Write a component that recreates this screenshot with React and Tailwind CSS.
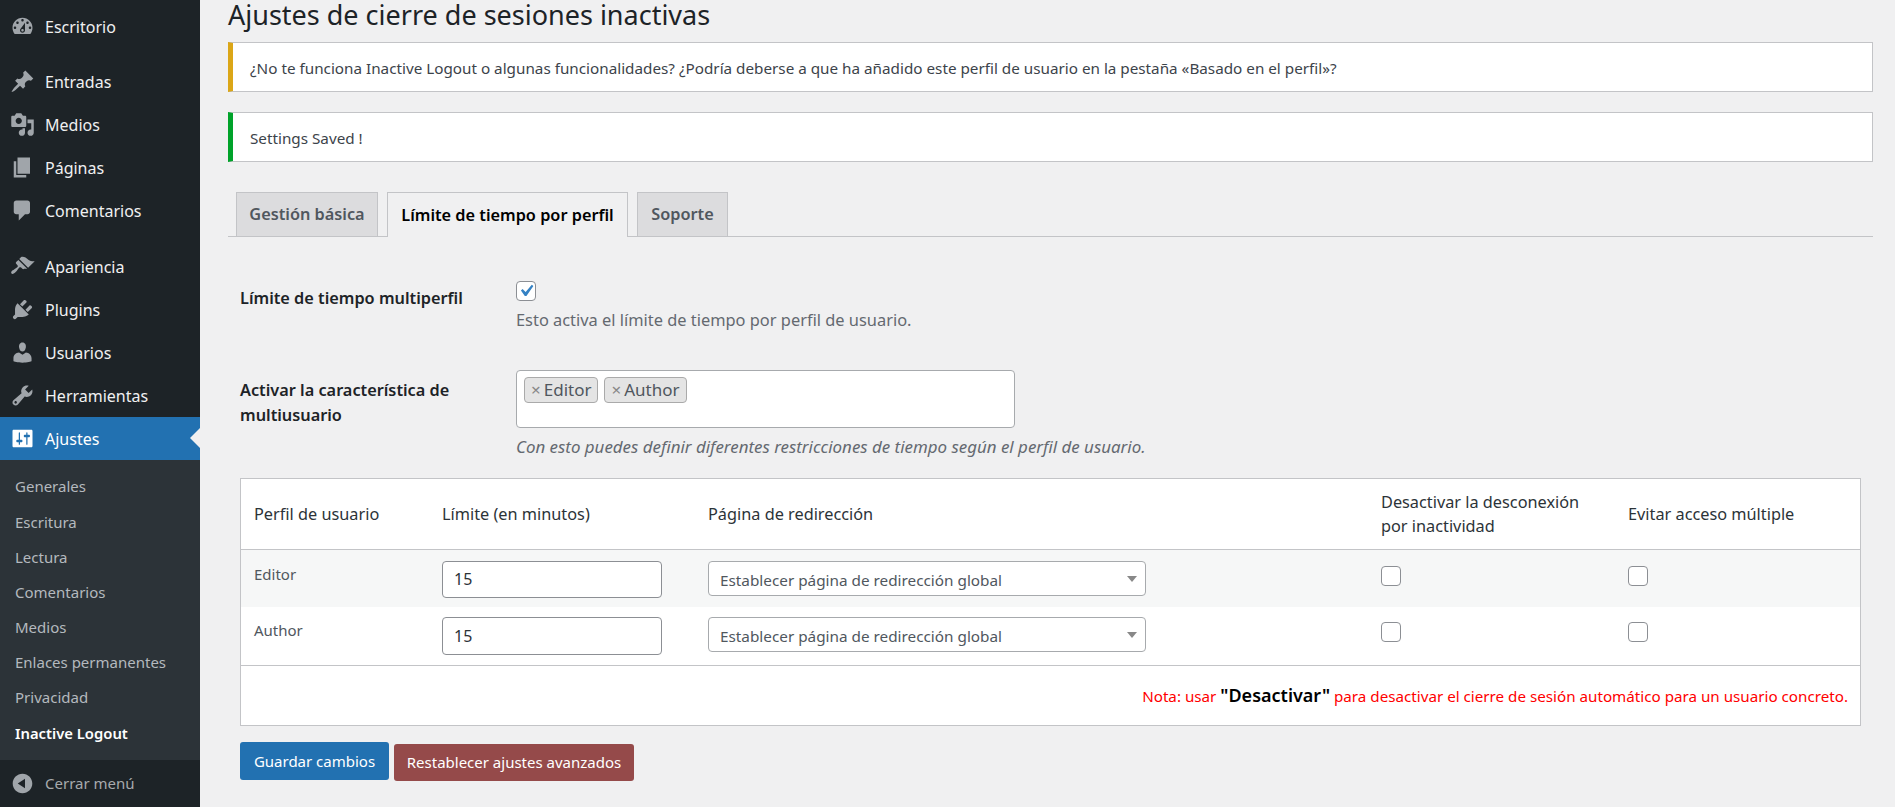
import React from 'react';

const ICONS = {
  dashboard: 'M3.76 16h12.48c1.1-1.37 1.76-3.11 1.76-5 0-4.42-3.58-8-8-8s-8 3.58-8 8c0 1.89.66 3.63 1.76 5zM10 4c.55 0 1 .45 1 1s-.45 1-1 1-1-.45-1-1 .45-1 1-1zM6 6c.55 0 1 .45 1 1s-.45 1-1 1-1-.45-1-1 .45-1 1-1zm8 0c.55 0 1 .45 1 1s-.45 1-1 1-1-.45-1-1 .45-1 1-1zm-5.37 5.55L12 7v6c0 1.1-.9 2-2 2s-2-.9-2-2c0-.57.24-1.08.63-1.45zM4 10c.55 0 1 .45 1 1s-.45 1-1 1-1-.45-1-1 .45-1 1-1zm12 0c.55 0 1 .45 1 1s-.45 1-1 1-1-.45-1-1 .45-1 1-1zm-5 3c0-.55-.45-1-1-1s-1 .45-1 1 .45 1 1 1 1-.45 1-1z',
  post: 'M10.44 3.02l1.82-1.82 6.36 6.35-1.83 1.82c-1.05-.68-2.48-.57-3.41.36l-.75.75c-.92.93-1.04 2.35-.35 3.41l-1.83 1.82-2.41-2.41-2.8 2.79c-.42.42-3.38 2.71-3.8 2.29s1.86-3.39 2.28-3.81l2.79-2.79L4.1 9.36l1.83-1.82c1.05.69 2.48.57 3.4-.36l.75-.75c.93-.92 1.05-2.35.36-3.41z',
  media: 'M13 11V4c0-.55-.45-1-1-1h-1.67L9 1H5L3.67 3H2c-.55 0-1 .45-1 1v7c0 .55.45 1 1 1h10c.55 0 1-.45 1-1zM7 4.5c1.38 0 2.5 1.12 2.5 2.5S8.38 9.5 7 9.5 4.5 8.38 4.5 7 5.62 4.5 7 4.5zM14 6h5v10.5c0 1.38-1.12 2.5-2.5 2.5S14 17.88 14 16.5s1.12-2.5 2.5-2.5c.17 0 .34.02.5.05V9h-3V6zm-4 8.05V13h2v3.5c0 1.38-1.12 2.5-2.5 2.5S7 17.88 7 16.5 8.12 14 9.5 14c.17 0 .34.02.5.05z',
  page: 'M6 15V2h10v13H6zm-1 1h8v2H3V5h2v11z',
  comments: 'M5 2h9c1.1 0 2 .9 2 2v7c0 1.1-.9 2-2 2h-2l-5 5v-5H5c-1.1 0-2-.9-2-2V4c0-1.1.9-2 2-2z',
  appearance: 'M14.48 11.06L7.41 3.99l1.5-1.5c.5-.56 2.3-.47 3.51.32 1.21.8 1.43 1.28 2.91 2.1 1.18.64 2.45 1.26 4.45.85zm-.71.71L6.7 4.7 4.93 6.47c-.39.39-.39 1.02 0 1.41l1.06 1.06c.39.39.39 1.03 0 1.42-.6.6-1.43 1.11-2.21 1.69-.35.26-.7.53-1.01.84C1.43 13.23.4 14.84 1.19 15.63c.79.79 2.4-.24 3.74-1.58.31-.31.58-.66.84-1.01.58-.78 1.09-1.61 1.69-2.21.39-.39 1.02-.39 1.41 0l1.06 1.06c.39.39 1.02.39 1.41 0z',
  plugins: 'M13.11 4.36L9.87 7.6 8 5.73l3.24-3.24c.35-.34 1.05-.2 1.56.32.52.51.66 1.21.31 1.55zm-8 1.77l.91-1.12 9.01 9.01-1.19.84c-.71.71-2.63 1.16-3.82 1.16H6.14L4.9 17.26c-.59.59-1.54.59-2.12 0-.59-.58-.59-1.53 0-2.12l1.24-1.24v-3.88c0-1.13.4-3.19 1.09-3.89zm7.26 3.97l3.24-3.24c.34-.35 1.04-.21 1.55.31.52.51.66 1.21.31 1.55l-3.24 3.25z',
  users: 'M10 9.25c-2.27 0-2.73-3.44-2.73-3.44C7 4.02 7.82 2 9.97 2c2.16 0 2.98 2.02 2.71 3.81 0 0-.41 3.44-2.68 3.44zm0 2.57L12.72 10c2.39 0 4.52 2.33 4.52 4.53v2.49s-3.65 1.13-7.24 1.13c-3.65 0-7.24-1.13-7.24-1.13v-2.49c0-2.25 1.94-4.48 4.47-4.48z',
  tools: 'M16.68 9.77c-1.34 1.34-3.3 1.67-4.95.99l-5.41 6.52c-.99.99-2.59.99-3.58 0s-.99-2.59 0-3.57l6.52-5.42c-.68-1.65-.35-3.61.99-4.95 1.28-1.28 3.12-1.62 4.72-1.06l-2.89 2.89 2.82 2.82 2.86-2.87c.53 1.58.18 3.39-1.08 4.65zM3.81 16.21c.4.39 1.04.39 1.43 0 .4-.4.4-1.04 0-1.43-.39-.4-1.03-.4-1.43 0-.39.39-.39 1.03 0 1.43z',
  settings: 'M18 16V4c0-.55-.45-1-1-1H3c-.55 0-1 .45-1 1v12c0 .55.45 1 1 1h14c.55 0 1-.45 1-1zM8 11h1c.55 0 1 .45 1 1s-.45 1-1 1H8v1.5c0 .28-.22.5-.5.5s-.5-.22-.5-.5V13H6c-.55 0-1-.45-1-1s.45-1 1-1h1V5.5c0-.28.22-.5.5-.5s.5.22.5.5V11zm5-2h-1c-.55 0-1-.45-1-1s.45-1 1-1h1V5.5c0-.28.22-.5.5-.5s.5.22.5.5V7h1c.55 0 1 .45 1 1s-.45 1-1 1h-1v5.5c0 .28-.22.5-.5.5s-.5-.22-.5-.5V9z',
  collapse: 'M10 2.16c4.33 0 7.84 3.51 7.84 7.84s-3.51 7.84-7.84 7.84S2.16 14.33 2.16 10 5.71 2.16 10 2.16zm2 11.72V6.12L6.18 9.97z',
};

const GROUPS = [
  [['dashboard', 'Escritorio']],
  [['post', 'Entradas'], ['media', 'Medios'], ['page', 'Páginas'], ['comments', 'Comentarios']],
  [['appearance', 'Apariencia'], ['plugins', 'Plugins'], ['users', 'Usuarios'], ['tools', 'Herramientas']],
];

const SUBMENU = ['Generales', 'Escritura', 'Lectura', 'Comentarios', 'Medios', 'Enlaces permanentes', 'Privacidad'];
const ROLES = ['Editor', 'Author'];

function Dashicon({ name, className }) {
  return (
    <svg viewBox="0 0 20 20" fill="currentColor" className={className}>
      <path d={ICONS[name]} />
    </svg>
  );
}

function MenuItem({ icon, label }) {
  return (
    <div className="flex h-[43px] items-center pl-[10px] text-[16px] text-[#f0f0f1]">
      <Dashicon name={icon} className="w-[25px] h-[25px] text-[#a0a5aa] shrink-0" />
      <span className="ml-[10px]">{label}</span>
    </div>
  );
}

function Sidebar() {
  return (
    <aside className="w-[200px] shrink-0 h-[807px] flex flex-col bg-[#1d2327]">
      <div className="pt-[5px]">
        <MenuItem icon={GROUPS[0][0][0]} label={GROUPS[0][0][1]} />
      </div>
      <div className="pt-[12px]">
        {GROUPS[1].map(([icon, label]) => <MenuItem key={label} icon={icon} label={label} />)}
      </div>
      <div className="pt-[13px]">
        {GROUPS[2].map(([icon, label]) => <MenuItem key={label} icon={icon} label={label} />)}
      </div>
      <div className="relative flex h-[43px] items-center pl-[10px] text-[16px] text-white bg-[#2271b1]">
        <Dashicon name="settings" className="w-[25px] h-[25px] text-white shrink-0" />
        <span className="ml-[10px]">Ajustes</span>
        <span className="absolute right-0 top-[11px] border-y-[10px] border-r-[10px] border-y-transparent border-r-[#f0f0f1]" />
      </div>
      <div className="flex-1 bg-[#2c3338] pt-[9px]">
        {SUBMENU.map((label) => (
          <div key={label} className="flex h-[35.2px] items-center pl-[15px] text-[15px] text-[#b4b9be]">{label}</div>
        ))}
        <div className="flex h-[35.2px] items-center pl-[15px] text-[14.8px] font-semibold text-white">Inactive Logout</div>
      </div>
      <div className="flex h-[47px] items-center pl-[10px] text-[15px] text-[#a7aaad]">
        <Dashicon name="collapse" className="w-[25px] h-[25px] text-[#a0a5aa] shrink-0" />
        <span className="ml-[10px]">Cerrar menú</span>
      </div>
    </aside>
  );
}

function Notice({ color, children }) {
  return (
    <div className={`flex h-[50px] items-center bg-white border border-[#c3c4c7] border-l-[5px] ${color} pl-[17px] pt-[2px] text-[15.25px] text-[#3c434a]`}>
      {children}
    </div>
  );
}

function Checkbox() {
  return <span className="block w-[20px] h-[20px] rounded-[4px] border border-[#8c8f94] bg-white" />;
}

function RoleRow({ role, striped }) {
  return (
    <tr className={`h-[58px] align-top ${striped ? 'bg-[#f6f7f7]' : 'bg-white'}`}>
      <td className={`pl-[13px] text-[15px] leading-[22px] text-[#50575e] ${striped ? 'pt-[13px]' : 'pt-[12px]'}`}>{role}</td>
      <td className={`pl-[14px] ${striped ? 'pt-[11px]' : 'pt-[10px]'}`}>
        <input
          type="text"
          defaultValue="15"
          className={`block w-[220px] rounded-[4px] border border-[#8c8f94] bg-white px-[11px] text-[16px] text-[#2c3338] ${striped ? 'h-[37px]' : 'h-[38px]'}`}
        />
      </td>
      <td className={`pl-[14px] ${striped ? 'pt-[11px]' : 'pt-[10px]'}`}>
        <div className="relative w-[438px]">
          <select className="block w-full h-[35px] appearance-none rounded-[4px] border border-[#a7aaad] bg-white pl-[11px] pt-[4px] text-[15.3px] text-[#50575e]">
            <option>Establecer página de redirección global</option>
          </select>
          <span className="absolute right-[9px] top-[15px] border-x-[5px] border-t-[6px] border-x-transparent border-t-[#888888]" />
        </div>
      </td>
      <td className={`pl-[14px] ${striped ? 'pt-[16px]' : 'pt-[15px]'}`}><Checkbox /></td>
      <td className={`pl-[14px] ${striped ? 'pt-[16px]' : 'pt-[15px]'}`}><Checkbox /></td>
    </tr>
  );
}

function Tag({ label }) {
  return (
    <span className="flex h-[26px] items-center rounded-[4px] border border-[#aaaaaa] bg-[#e4e4e4] px-[6px] text-[17px] text-[#50575e]">
      <span className="mr-[3px] text-[#888888]">×</span>{label}
    </span>
  );
}

export default function App() {
  return (
    <div className="flex h-[807px] overflow-hidden bg-[#f0f0f1] font-['Noto_Sans',sans-serif]">
      <Sidebar />
      <main className="flex-1 pl-[28px] pr-[22px]">
        <h1 className="text-[27px] leading-[30px] text-[#1d2327]">Ajustes de cierre de sesiones inactivas</h1>

        <div className="mt-[12px]">
          <Notice color="border-l-[#dba617]">¿No te funciona Inactive Logout o algunas funcionalidades? ¿Podría deberse a que ha añadido este perfil de usuario en la pestaña «Basado en el perfil»?</Notice>
        </div>
        <div className="mt-[20px]">
          <Notice color="border-l-[#00a32a]">Settings Saved !</Notice>
        </div>

        <div className="mt-[30px] flex gap-[9px] border-b border-[#c3c4c7] pl-[8px] text-[16.3px] font-semibold">
          <div className="flex h-[44px] w-[142px] items-center justify-center border border-b-0 border-[#c3c4c7] bg-[#dcdcde] text-[#50575e]">Gestión básica</div>
          <div className="-mb-px flex h-[45px] w-[241px] items-center justify-center border border-b-0 border-[#c3c4c7] bg-[#f0f0f1] text-black">Límite de tiempo por perfil</div>
          <div className="flex h-[44px] w-[91px] items-center justify-center border border-b-0 border-[#c3c4c7] bg-[#dcdcde] text-[#50575e]">Soporte</div>
        </div>

        <div className="px-[12px]">
          <div className="mt-[44px] flex">
            <div className="w-[276px] pt-[5px] text-[16.3px] font-semibold leading-[24px] text-[#1d2327]">Límite de tiempo multiperfil</div>
            <div>
              <span className="flex w-[20px] h-[20px] items-center justify-center rounded-[4px] border border-[#8c8f94] bg-white">
                <svg viewBox="0 0 20 20" className="w-[24px] h-[24px] shrink-0" fill="#3582c4"><path d="M14.83 4.89l1.34.94-5.81 8.38H9.02L5.78 9.67l1.34-1.25 2.57 2.4z" /></svg>
              </span>
              <p className="mt-[7px] text-[16.4px] leading-[24px] text-[#646970]">Esto activa el límite de tiempo por perfil de usuario.</p>
            </div>
          </div>

          <div className="mt-[38px] flex">
            <div className="w-[276px] pt-[8px] text-[16.3px] font-semibold leading-[25px] text-[#1d2327]">Activar la característica de<br />multiusuario</div>
            <div>
              <div className="flex h-[58px] w-[499px] items-start gap-[6px] rounded-[4px] border border-[#a7aaad] bg-white pl-[7px] pt-[6px]">
                {['Editor', 'Author'].map((t) => <Tag key={t} label={t} />)}
              </div>
              <p className="mt-[7px] text-[16.9px] italic leading-[24px] text-[#646970]">Con esto puedes definir diferentes restricciones de tiempo según el perfil de usuario.</p>
            </div>
          </div>

          <div className="mt-[19px] border border-[#c3c4c7] bg-white">
            <table className="w-full table-fixed border-collapse">
              <thead>
                <tr className="h-[70px] border-b border-[#c3c4c7] text-left text-[16.3px] leading-[24px] text-[#2c3338]">
                  <th className="w-[187px] pl-[13px] font-normal">Perfil de usuario</th>
                  <th className="w-[266px] pl-[14px] font-normal">Límite (en minutos)</th>
                  <th className="w-[673px] pl-[14px] font-normal">Página de redirección</th>
                  <th className="w-[247px] pl-[14px] font-normal">Desactivar la desconexión<br />por inactividad</th>
                  <th className="pl-[14px] font-normal">Evitar acceso múltiple</th>
                </tr>
              </thead>
              <tbody>
                {ROLES.map((role, i) => <RoleRow key={role} role={role} striped={i === 0} />)}
              </tbody>
            </table>
            <div className="flex h-[60px] items-center justify-end border-t border-[#c3c4c7] pr-[12px] text-[15.2px] text-[#ff0000]">
              <span>Nota: usar <b className="text-[18px] font-semibold text-black">"Desactivar"</b> para desactivar el cierre de sesión automático para un usuario concreto.</span>
            </div>
          </div>

          <div className="mt-[16px] flex items-start gap-[5px] text-[15px]">
            <button className="h-[38px] w-[149px] rounded-[3px] bg-[#2271b1] text-[15px] text-white">Guardar cambios</button>
            <button className="mt-[2px] h-[37px] w-[240px] rounded-[3px] bg-[#954a4a] text-white">Restablecer ajustes avanzados</button>
          </div>
        </div>
      </main>
    </div>
  );
}
